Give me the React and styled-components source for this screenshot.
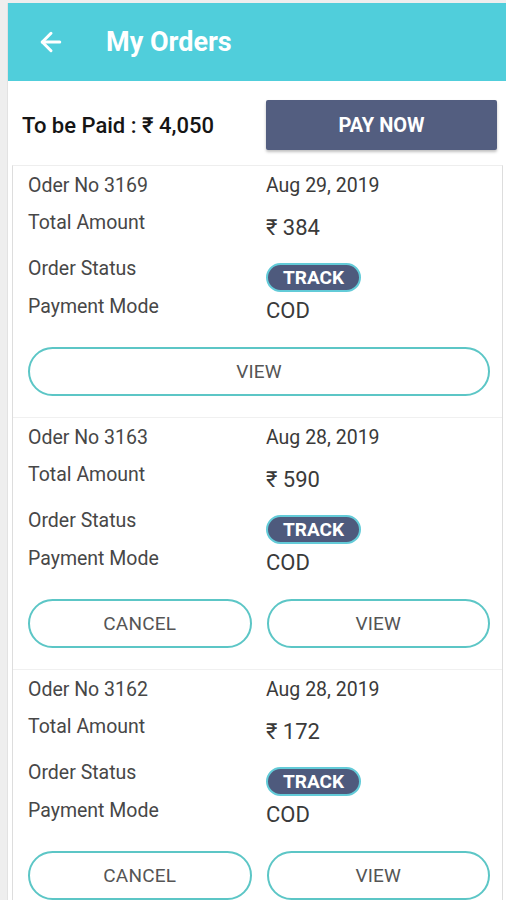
import styled, { createGlobalStyle } from 'styled-components'
import { ArrowLeft } from 'lucide-react'

const GlobalStyle = createGlobalStyle`
  body {
    margin: 0;
    background: #eeeeee;
    font-family: Roboto, 'Noto Sans', 'DejaVu Sans', sans-serif;
  }
`

const Page = styled.div`
  height: 900px;
  overflow: hidden;
  padding: 3px 0 0 7px;
  box-sizing: border-box;
`

const Screen = styled.div`
  background: #ffffff;
  height: 100%;
  border-left: 1px solid #e2e2e2;
`

const Header = styled.header`
  height: 78px;
  background: #50cedb;
  display: flex;
  align-items: center;
  padding-left: 28px;
  color: #ffffff;
  gap: 40px;
`

const Title = styled.h1`
  margin: 0;
  font-size: 27px;
  font-weight: 700;
`

const Summary = styled.div`
  height: 79px;
  display: flex;
  justify-content: space-between;
  align-items: flex-start;
  padding: 19px 9px 0 14px;
  box-sizing: border-box;
`

const DueText = styled.div`
  font-size: 22px;
  font-weight: 500;
  color: #151515;
  line-height: 52px;
`

const PayButton = styled.button`
  width: 231px;
  height: 50px;
  border: none;
  border-radius: 2px;
  background: #535e80;
  color: #ffffff;
  font-family: inherit;
  font-size: 20px;
  font-weight: 700;
  box-shadow: 0 2px 3px rgba(0, 0, 0, 0.25);
`

const List = styled.div`
  margin: 5px 3px 0 4px;
  border-left: 1px solid #dddddd;
  border-right: 1px solid #dddddd;
  border-top: 1px solid #eeeeee;
  background: #ffffff;
`

const Card = styled.div`
  height: 252px;
  box-sizing: border-box;
  padding: 9px 12px 0 15px;
  border-bottom: 1px solid #f0f0f0;
`

const Row = styled.div`
  display: grid;
  grid-template-columns: 238px 1fr;
  height: ${p => p.$height}px;
`

const Label = styled.div`
  font-size: 19.5px;
  line-height: 22px;
  color: #474747;
`

const Value = styled.div`
  font-size: ${p => (p.$large ? 22 : 19.5)}px;
  line-height: ${p => (p.$large ? 24 : 22)}px;
  color: #3a3a3a;
  padding-top: ${p => p.$shift || 0}px;
`

const Badge = styled.span`
  display: inline-flex;
  align-items: center;
  justify-content: center;
  margin-top: 5px;
  width: 95px;
  height: 29px;
  box-sizing: border-box;
  border-radius: 15px;
  border: 2px solid #63cbd8;
  background: #4e5a7d;
  color: #ffffff;
  font-size: 19px;
  font-weight: 700;
`

const Actions = styled.div`
  display: grid;
  grid-template-columns: ${p => (p.$split ? '1fr 1fr' : '1fr')};
  gap: 15px;
`

const OutlineButton = styled.button`
  height: 49px;
  border: 2px solid #5cc6c6;
  border-radius: 25px;
  background: #ffffff;
  color: #555555;
  font-family: inherit;
  font-size: 19px;
  letter-spacing: 0.2px;
`

const orders = [
  { no: 3169, date: 'Aug 29, 2019', amount: 384, mode: 'COD', cancel: false },
  { no: 3163, date: 'Aug 28, 2019', amount: 590, mode: 'COD', cancel: true },
  { no: 3162, date: 'Aug 28, 2019', amount: 172, mode: 'COD', cancel: true },
]

const OrderCard = ({ order }) => (
  <Card>
    <Row $height={37}>
      <Label>Oder No {order.no}</Label>
      <Value>{order.date}</Value>
    </Row>
    <Row $height={46}>
      <Label>Total Amount</Label>
      <Value $large $shift={4}>₹ {order.amount}</Value>
    </Row>
    <Row $height={38}>
      <Label>Order Status</Label>
      <div>
        <Badge>TRACK</Badge>
      </div>
    </Row>
    <Row $height={51}>
      <Label>Payment Mode</Label>
      <Value $large $shift={3}>{order.mode}</Value>
    </Row>
    <Actions $split={order.cancel}>
      {order.cancel && <OutlineButton>CANCEL</OutlineButton>}
      <OutlineButton>VIEW</OutlineButton>
    </Actions>
  </Card>
)

export default function App() {
  return (
    <>
      <GlobalStyle />
      <Page>
        <Screen>
          <Header>
            <ArrowLeft size={30} strokeWidth={2.4} />
            <Title>My Orders</Title>
          </Header>
          <Summary>
            <DueText>To be Paid : ₹ 4,050</DueText>
            <PayButton>PAY NOW</PayButton>
          </Summary>
          <List>
            {orders.map(order => (
              <OrderCard key={order.no} order={order} />
            ))}
          </List>
        </Screen>
      </Page>
    </>
  )
}
